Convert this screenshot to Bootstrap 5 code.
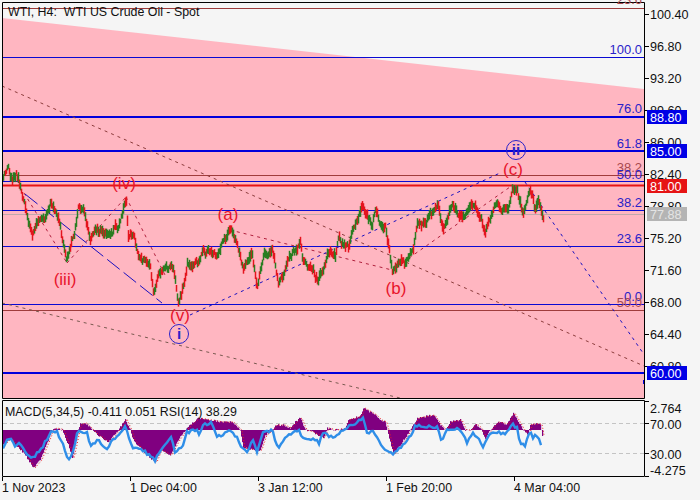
<!DOCTYPE html>
<html lang="en">
<head>
    <meta charset="UTF-8">
    <title>WTI, H4</title>
    <link href="https://cdn.jsdelivr.net/npm/bootstrap@5.3.0/dist/css/bootstrap.min.css" rel="stylesheet">
    <style>
        body {
            background: #f5f5f5;
            overflow: hidden;
        }
        .terminal {
            width: 700px;
            height: 500px;
        }
        .terminal svg {
            display: block;
        }
        .terminal text {
            font-family: "Liberation Sans", Arial, sans-serif;
            font-size: 12.4px;
            fill: #111;
        }
        .terminal text.axis {
            font-size: 12.6px;
        }
        .terminal text.fib {
            text-anchor: end;
            font-size: 13px;
            fill: #2a22c8;
        }
        .terminal text.fib-old {
            text-anchor: end;
            font-size: 13px;
            fill: #a8484e;
        }
        .terminal text.wave {
            font-size: 17px;
            text-anchor: middle;
            fill: #e8142c;
        }
        .terminal text.wave-major {
            font-size: 15px;
            font-weight: bold;
            text-anchor: middle;
            fill: #2a22c8;
        }
        .terminal text.tag {
            font-size: 12.6px;
            fill: #fff;
        }
        .terminal text.tag-last {
            font-size: 12.6px;
            fill: #e4e4e4;
        }
    </style>
</head>
<body>
    <div class="terminal d-flex flex-column">
        <svg id="pricePane" width="700" height="399" viewBox="0 0 700 399"></svg>
        <svg id="macdPane" width="700" height="101" viewBox="0 399 700 101"></svg>
    </div>

    <script src="https://cdn.jsdelivr.net/npm/bootstrap@5.3.0/dist/js/bootstrap.bundle.min.js"></script>
    <script>
        // fixed seed so every render gives the same bars
        let seed = 2024;
        function rnd() {
            seed = (seed * 16807) % 2147483647;
            return seed / 2147483647;
        }

        function interp(points, x) {
            for (let i = 1; i < points.length; i++) {
                if (x <= points[i][0]) {
                    const a = points[i - 1], b = points[i];
                    return a[1] + (b[1] - a[1]) * (x - a[0]) / (b[0] - a[0]);
                }
            }
            return points[points.length - 1][1];
        }

        function line(x1, y1, x2, y2, color, width, dash) {
            return `<line x1="${x1}" y1="${y1}" x2="${x2}" y2="${y2}" stroke="${color}" stroke-width="${width}"${dash ? ` stroke-dasharray="${dash}"` : ''}/>`;
        }

        function text(x, y, label, cls) {
            return `<text x="${x}" y="${y}"${cls ? ` class="${cls}"` : ''}>${label}</text>`;
        }

        // close price traced from the chart, as [x, y]
        const closes = [[3,180],[8,163],[12,180],[16,172],[21,190],[25,205],[28,222],[32,236],[38,224],[44,222],[50,205],[56,212],[60,222],[66,262],[70,250],[73,240],[78,210],[84,215],[90,238],[97,228],[104,235],[110,232],[118,225],[126,197],[128,235],[133,232],[137,250],[145,258],[150,267],[153,290],[158,280],[163,273],[173,270],[178,303],[183,285],[187,265],[198,265],[203,250],[213,250],[217,258],[223,243],[230,230],[235,237],[243,270],[252,257],[257,290],[263,253],[272,248],[278,283],[287,262],[300,240],[303,260],[318,280],[327,253],[335,260],[338,238],[348,248],[357,220],[363,205],[372,230],[375,213],[382,233],[385,225],[392,270],[400,257],[405,262],[413,247],[417,227],[425,228],[433,212],[438,208],[443,232],[452,208],[463,220],[475,205],[485,230],[495,207],[508,210],[512,188],[517,193],[523,213],[530,190],[535,210],[538,197],[543,216]];

        function buildPrice() {
            let s = '';
            s += '<polygon points="2,18 644,89 644,398 2,398" fill="#ffb6c1"/>';

            // levels
            s += line(2, 8.5, 644, 8.5, '#9c3a3a', 1);
            s += line(2, 57.5, 644, 57.5, '#0a0ad2', 1);
            s += line(2, 117, 644, 117, '#0000dc', 2);
            s += line(2, 151, 644, 151, '#0000dc', 2);
            s += line(2, 175.5, 644, 175.5, '#a03c3c', 1);
            s += line(2, 181.5, 644, 181.5, '#0a0ad2', 1);
            s += line(2, 185.5, 644, 185.5, '#e81414', 2);
            s += line(2, 210.5, 644, 210.5, '#0a0ad2', 1);
            s += line(2, 214.5, 644, 214.5, '#c0a8ac', 1);
            s += line(2, 246.5, 644, 246.5, '#0a0ad2', 1);
            s += line(2, 304.5, 644, 304.5, '#0a0ad2', 1);
            s += line(2, 310.5, 644, 310.5, '#a03c3c', 1);
            s += line(2, 373, 644, 373, '#0000dc', 2);

            // channel
            s += line(2, 86, 644, 366, '#8c3c3c', 1, '3 4');
            s += line(2, 303, 400, 398, '#7a5a50', 1, '3 4');

            // sub waves
            const red = '#b0203c';
            s += line(24, 193, 67, 263, red, 1, '3 4');
            s += line(67, 263, 126, 197, red, 1, '3 4');
            s += line(126, 197, 165, 275, red, 1, '3 4');
            s += line(230, 230, 392, 270, red, 1, '3 4');
            s += line(392, 270, 510, 187, red, 1, '3 4');

            // main waves
            s += line(25, 194, 162, 303, '#1a10c0', 1, '16 5');
            s += line(190, 315, 500, 173, '#1a10c0', 1, '3 4');
            s += line(525, 182, 643, 353, '#1a10c0', 1, '3 4');
            s += line(643.5, 380, 643.5, 384, '#0000dc', 1);

            // bars, one pixel apart
            let drift = 0;
            for (let x = 3; x <= 543; x++) {
                drift = drift * 0.8 + (rnd() - 0.5) * 5;
                const c = interp(closes, x) + drift;
                const up = interp(closes, x + 2) < interp(closes, x - 2) ? 0.7 : 0.35;
                const green = rnd() < up;
                const top = c - 2 - rnd() * 4;
                const bottom = c + 2 + rnd() * 4;
                s += line(x + 0.5, top.toFixed(1), x + 0.5, bottom.toFixed(1), green ? '#2a7d22' : '#e4141e', 1.5);
            }

            // frame
            s += '<polyline points="2.5,398.5 2.5,2.5 644.5,2.5 644.5,398.5 2.5,398.5" fill="none" stroke="#000"/>';

            // price axis
            const axis = [[14,'100.40'],[46,'96.80'],[78,'93.20'],[110,'89.60'],[142,'86.00'],[174,'82.40'],[206,'78.80'],[238,'75.20'],[270,'71.60'],[302,'68.00'],[334,'64.40'],[366,'60.80']];
            axis.forEach(([y, label]) => {
                s += line(645, y + 0.5, 649, y + 0.5, '#000', 1);
                s += text(650, y + 5, label, 'axis');
            });

            // level tags
            const tags = [[110,'#0000e6','88.80','tag'],[144,'#0000e6','85.00','tag'],[179,'#e61414','81.00','tag'],[207,'#b4b4b4','77.88','tag-last'],[366,'#0000e6','60.00','tag']];
            tags.forEach(([y, color, label, cls]) => {
                s += `<rect x="647" y="${y}" width="40" height="14" fill="${color}"/>`;
                s += text(650, y + 12, label, cls);
            });

            // fibo labels
            const fibs = [[4,'23.6','fib-old'],[54,'100.0','fib'],[113,'76.0','fib'],[148,'61.8','fib'],[172,'38.2','fib-old'],[179,'50.0','fib'],[207,'38.2','fib'],[243,'23.6','fib'],[301,'0.0','fib'],[307,'50.0','fib-old']];
            fibs.forEach(([y, label, cls]) => {
                s += text(642, y, label, cls);
            });

            // wave marks
            const waves = [[124,189,'(iv)'],[65,285,'(iii)'],[228,220,'(a)'],[180,321,'(v)'],[396,294,'(b)'],[513,175,'(c)']];
            waves.forEach(([x, y, label]) => {
                s += text(x, y, label, 'wave');
            });
            s += '<circle cx="179" cy="334" r="9.5" fill="none" stroke="#2a22c8"/>';
            s += text(179, 339, 'i', 'wave-major');
            s += '<circle cx="516" cy="150" r="9.5" fill="none" stroke="#2a22c8"/>';
            s += text(516, 155, 'ii', 'wave-major');

            s += text(8, 16, 'WTI, H4:&nbsp; WTI US Crude Oil - Spot');
            document.getElementById('pricePane').innerHTML = s;
        }

        // macd histogram edge, as [x, y]; zero line at y = 430
        const macd = [[3,445],[10,438],[15,445],[25,455],[33,468],[40,460],[48,440],[52,430],[55,428],[60,429],[62,430],[68,445],[72,458],[75,445],[78,430],[80,424],[85,423],[90,428],[92,430],[96,434],[108,442],[113,436],[118,430],[122,424],[125,419],[128,426],[130,430],[133,440],[140,448],[150,458],[155,462],[160,450],[170,455],[178,440],[185,430],[190,425],[198,418],[210,420],[222,422],[232,422],[240,430],[243,448],[255,450],[260,450],[265,435],[272,430],[275,425],[283,425],[290,428],[295,422],[300,418],[305,430],[312,432],[323,438],[327,428],[335,430],[345,428],[348,420],[360,416],[363,408],[375,415],[380,420],[385,422],[387,430],[393,454],[400,445],[410,430],[417,418],[433,415],[440,425],[445,430],[450,422],[460,420],[465,430],[470,430],[475,424],[480,428],[485,438],[490,430],[497,422],[507,424],[513,413],[520,425],[523,430],[528,435],[530,424],[540,424],[542,435]];
        const rsi = [[3,447],[10,437],[15,447],[20,442],[27,455],[33,458],[42,448],[50,433],[57,432],[63,445],[68,460],[72,455],[78,430],[88,433],[90,447],[97,440],[107,448],[115,438],[126,425],[128,438],[133,447],[143,450],[155,460],[163,447],[172,437],[175,453],[183,445],[187,432],[197,430],[198,437],[203,425],[212,423],[217,437],[230,431],[237,438],[242,448],[248,452],[252,438],[257,452],[263,433],[272,430],[278,448],[287,435],[298,430],[305,440],[317,440],[318,448],[323,432],[333,438],[342,430],[353,425],[363,418],[367,433],[373,432],[378,440],[385,450],[392,454],[400,448],[413,433],[415,425],[438,427],[442,442],[447,430],[460,428],[467,443],[473,432],[478,438],[483,448],[490,433],[507,433],[512,424],[517,428],[520,443],[525,445],[530,432],[533,437],[538,435],[542,447]];

        function buildMacd() {
            let s = '';
            s += line(3, 423.5, 644, 423.5, '#c4c4c4', 1, '4 3');
            s += line(3, 453.5, 644, 453.5, '#c4c4c4', 1, '4 3');

            for (let x = 3; x <= 542; x++) {
                const y = interp(macd, x) + (rnd() - 0.5) * 2;
                const top = Math.min(y, 430), height = Math.abs(y - 430);
                s += `<rect x="${x}" y="${top.toFixed(1)}" width="1.2" height="${height.toFixed(1)}" fill="#800080"/>`;
            }

            const shifted = macd.map(p => `${p[0] + 2},${p[1]}`).join(' ');
            s += `<polyline points="${shifted}" fill="none" stroke="#ee2020" stroke-width="1" stroke-dasharray="1 2"/>`;

            // rsi gets a bit of noise, it is not as smooth as the traced points
            const rsiPts = [];
            for (let x = 3; x <= 542; x += 2) {
                rsiPts.push(`${x},${(interp(rsi, x) + (rnd() - 0.5) * 3).toFixed(1)}`);
            }
            s += `<polyline points="${rsiPts.join(' ')}" fill="none" stroke="#2f8ee8" stroke-width="2.4"/>`;

            s += '<polyline points="2.5,400.5 644.5,400.5 644.5,476.5 2.5,476.5 2.5,400.5" fill="none" stroke="#000"/>';

            [[401,408,'2.764'],[423,424,'70.00'],[453,454,'30.00'],[476,470,'-4.275']].forEach(([tick, y, label]) => {
                s += line(645, tick + 0.5, 649, tick + 0.5, '#000', 1);
                s += text(650, y + 5, label, 'axis');
            });

            [[2,'1 Nov 2023'],[130,'1 Dec 04:00'],[258,'3 Jan 12:00'],[386,'1 Feb 20:00'],[514,'4 Mar 04:00']].forEach(([x, label]) => {
                s += line(x + 0.5, 477, x + 0.5, 481, '#000', 1);
                s += text(x, 491.5, label);
            });

            s += text(5, 416, 'MACD(5,34,5) -0.411 0.051 RSI(14) 38.29');
            document.getElementById('macdPane').innerHTML = s;
        }

        buildPrice();
        buildMacd();
    </script>
</body>
</html>
